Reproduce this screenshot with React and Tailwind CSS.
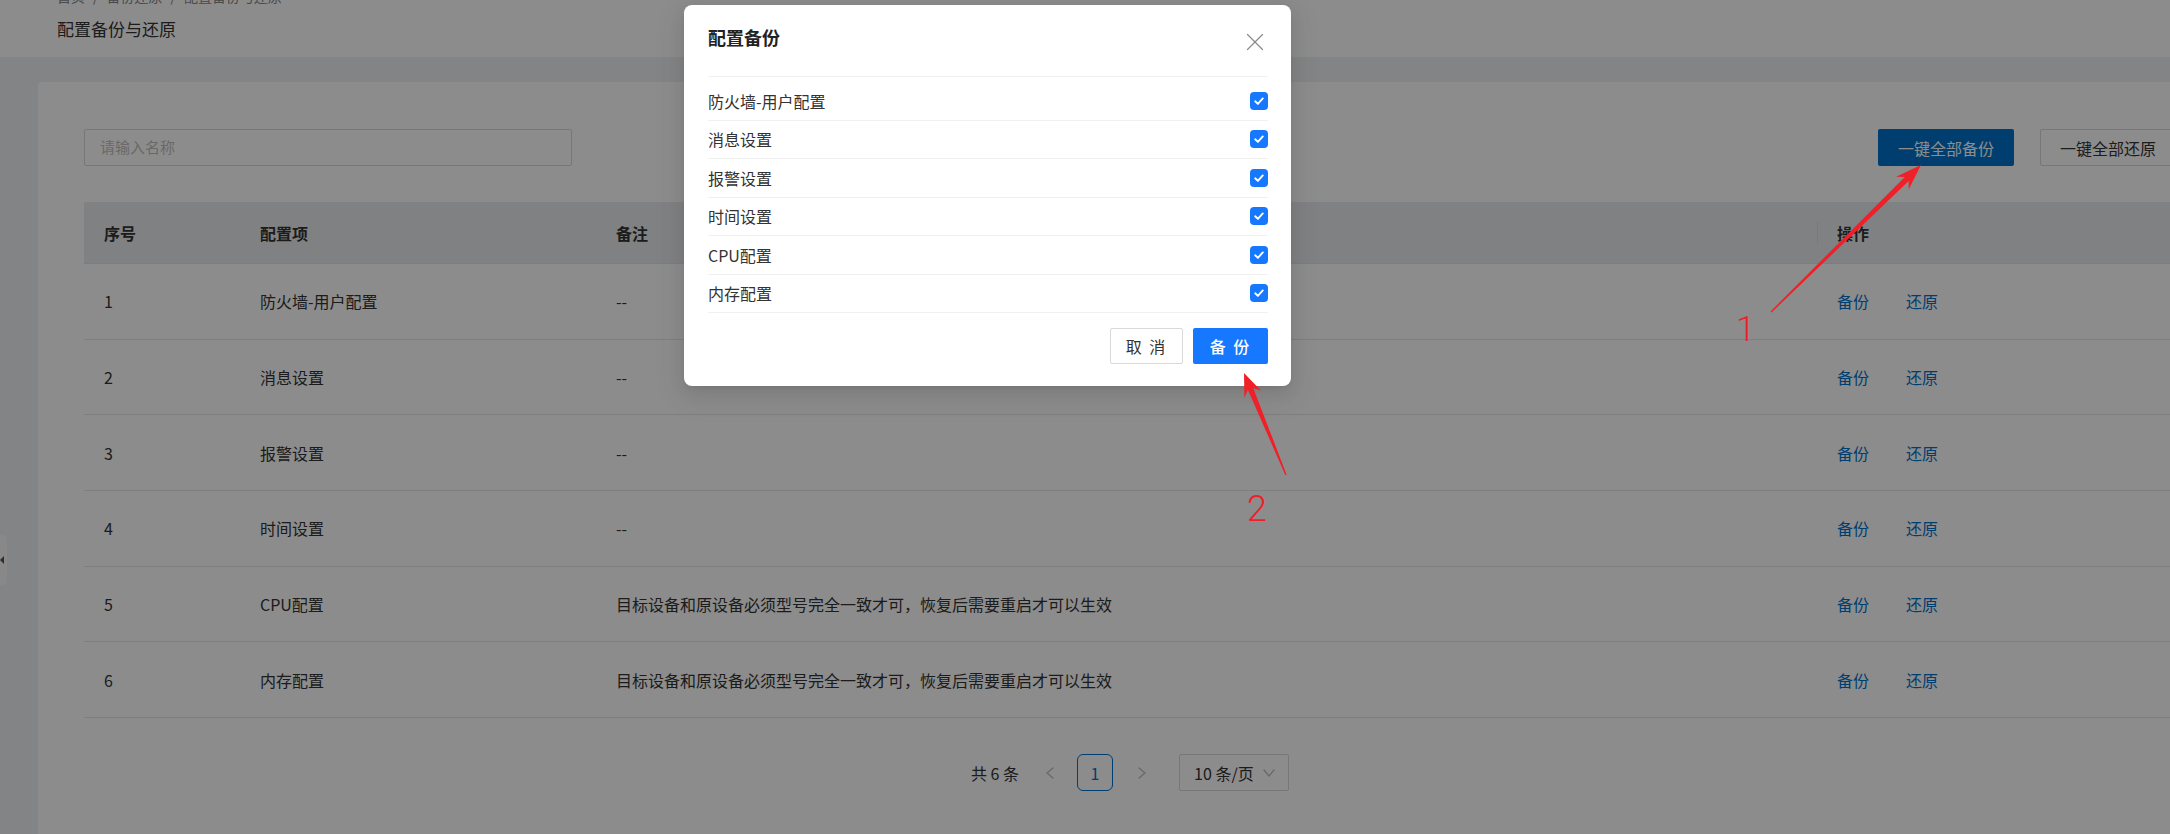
import React from 'react';
import { X } from 'lucide-react';

const rows = [
    { id: 1, name: '防火墙-用户配置', remark: '--' },
    { id: 2, name: '消息设置', remark: '--' },
    { id: 3, name: '报警设置', remark: '--' },
    { id: 4, name: '时间设置', remark: '--' },
    { id: 5, name: 'CPU配置', remark: '目标设备和原设备必须型号完全一致才可，恢复后需要重启才可以生效' },
    { id: 6, name: '内存配置', remark: '目标设备和原设备必须型号完全一致才可，恢复后需要重启才可以生效' },
];

// builds a tapered arrow polygon from tail to tip
const arrowPoints = (tail, tip, head = 24, half = 9) => {
    const dx = tip[0] - tail[0];
    const dy = tip[1] - tail[1];
    const len = Math.hypot(dx, dy);
    const ux = dx / len, uy = dy / len;
    const nx = -uy, ny = ux;
    const local = [
        [0, -0.7], [len - head + 4, -2.8], [len - head - 2, -half], [len, 0],
        [len - head - 2, half], [len - head + 4, 2.8], [0, 0.7],
    ];
    return local
        .map(([a, b]) => `${(tail[0] + ux * a + nx * b).toFixed(1)},${(tail[1] + uy * a + ny * b).toFixed(1)}`)
        .join(' ');
};

const CheckBox = () => (
    <span className="w-[18px] h-[18px] rounded-[4px] bg-[#1677ff] flex items-center justify-center">
        <svg width="12" height="12" viewBox="0 0 12 12" fill="none">
            <polyline points="2.2,6.3 4.9,8.9 9.8,3.4" stroke="white" strokeWidth="1.9" strokeLinecap="round" strokeLinejoin="round" />
        </svg>
    </span>
);

const Chevron = ({ points, w = 10, h = 12 }) => (
    <svg width={w} height={h} viewBox={`0 0 ${w} ${h}`} fill="none">
        <polyline points={points} stroke="currentColor" strokeWidth="1.3" strokeLinecap="round" strokeLinejoin="round" />
    </svg>
);

const App = () => {
    return (
        <div className="relative w-[2170px] h-[834px] overflow-hidden bg-[#eef0f3] font-['Noto_Sans_CJK_SC','Noto_Sans',sans-serif] text-[#333]">
            <header className="h-[57px] bg-white pl-[57px] flex flex-col">
                <div className="-mt-[14px] h-[20px] flex items-center gap-[8px] text-[14px] leading-[20px] text-[#888]">
                    <span>首页</span><span>/</span><span>备份还原</span><span>/</span><span>配置备份与还原</span>
                </div>
                <h1 className="mt-[11px] text-[17px] leading-[24px] text-[#333]">配置备份与还原</h1>
            </header>

            <div className="pl-[38px] pt-[25px]">
                <div className="w-[2184px] h-[800px] bg-white rounded-[4px] px-[46px] pt-[47px]">
                    <div className="flex items-center justify-between">
                        <div className="w-[488px] h-[37px] border border-[#d9d9d9] rounded-[2px] px-[15px] flex items-center text-[15px] text-[#bfbfbf]">
                            请输入名称
                        </div>
                        <div className="flex items-center gap-[26px]">
                            <button className="w-[136px] h-[37px] rounded-[2px] bg-[#0071cc] text-white text-[16px]">一键全部备份</button>
                            <button className="w-[136px] h-[37px] rounded-[2px] border border-[#d9d9d9] bg-white text-[#333] text-[16px]">一键全部还原</button>
                        </div>
                    </div>

                    <div className="mt-[36px]">
                        <div className="grid grid-cols-[156px_356px_1221px_1fr] h-[62px] bg-[#eaecef] border-b border-[#e4e4e4] items-center text-[16px] font-bold text-[#333]">
                            <div className="pl-[20px]">序号</div>
                            <div className="pl-[20px]">配置项</div>
                            <div className="pl-[20px]">备注</div>
                            <div className="pl-[20px] relative">
                                <span className="absolute left-0 top-1/2 -translate-y-1/2 w-px h-[22px] bg-[#dcdcdc]" />
                                操作
                            </div>
                        </div>
                        {rows.map((row) => (
                            <div key={row.id} className="grid grid-cols-[156px_356px_1221px_1fr] h-[75.7px] border-b border-[#e6e6e6] items-center text-[16px] text-[#333]">
                                <div className="pl-[20px]">{row.id}</div>
                                <div className="pl-[20px]">{row.name}</div>
                                <div className="pl-[20px]">{row.remark}</div>
                                <div className="pl-[20px] flex gap-[37px] text-[#0071cc]">
                                    <span>备份</span>
                                    <span>还原</span>
                                </div>
                            </div>
                        ))}
                    </div>

                    <div className="mt-[36px] flex items-center justify-center text-[16px] text-[#333]">
                        <span>共 6 条</span>
                        <span className="ml-[15px] w-[32px] h-[36px] flex items-center justify-center text-[#bfbfbf]">
                            <Chevron points="8,1 2,6 8,11" />
                        </span>
                        <span className="ml-[11px] w-[36px] h-[37px] border border-[#0071cc] rounded-[6px] flex items-center justify-center text-[#0071cc]">1</span>
                        <span className="ml-[13px] w-[32px] h-[36px] flex items-center justify-center text-[#bfbfbf]">
                            <Chevron points="2,1 8,6 2,11" />
                        </span>
                        <div className="ml-[21px] w-[110px] h-[37px] border border-[#d9d9d9] rounded-[2px] pl-[14px] pr-[13px] flex items-center justify-between">
                            <span>10 条/页</span>
                            <span className="text-[#bfbfbf] flex">
                                <Chevron points="1,2 6,8 11,2" w={12} h={10} />
                            </span>
                        </div>
                    </div>
                </div>
            </div>

            <div className="absolute left-0 top-[535px] w-[7px] h-[50px] bg-[#f7f7f7] rounded-r-[4px] flex items-center">
                <span className="w-0 h-0 border-y-[4px] border-y-transparent border-r-[4px] border-r-[#555]" />
            </div>

            <div className="absolute inset-0 bg-black/45" />

            <div className="absolute left-[684px] top-[5px] w-[607px] h-[381px] bg-white rounded-[8px] pl-[24px] pr-[23px] shadow-[0_6px_16px_0_rgba(0,0,0,0.08),0_3px_6px_-4px_rgba(0,0,0,0.12),0_9px_28px_8px_rgba(0,0,0,0.05)]">
                <div className="pt-[20px] pb-[27px] border-b border-[#f0f0f0]">
                    <h2 className="text-[18px] leading-[24px] font-bold text-[#222]">配置备份</h2>
                </div>
                <button className="absolute right-[21px] top-[22px] text-[#8c8c8c]">
                    <X size={30} strokeWidth={1} />
                </button>
                <div className="pt-[5px]">
                    {rows.map((row) => (
                        <div key={row.id} className="h-[38.5px] border-b border-[#f0f0f0] flex items-center justify-between text-[16px] text-[#333]">
                            <span>{row.name}</span>
                            <CheckBox />
                        </div>
                    ))}
                </div>
                <div className="mt-[15px] flex justify-end gap-[10px]">
                    <button className="w-[73px] h-[36px] border border-[#d9d9d9] rounded-[2px] bg-white text-[16px] text-[#333] tracking-[2px]">取 消</button>
                    <button className="w-[75px] h-[36px] rounded-[2px] bg-[#1677ff] text-[16px] font-medium text-white tracking-[2px]">备 份</button>
                </div>
            </div>

            <svg className="absolute inset-0 pointer-events-none" width="2170" height="834">
                <polygon points={arrowPoints([1771, 312], [1921, 165], 24, 9)} fill="#f02028" />
                <polygon points={arrowPoints([1286, 475], [1244, 373], 21, 9)} fill="#f02028" />
            </svg>
            <span className="absolute left-[1736px] top-[310px] text-[35px] leading-[40px] font-light font-['Roboto',sans-serif] text-[#f02028]">1</span>
            <span className="absolute left-[1247px] top-[489px] text-[36px] leading-[40px] font-light font-['Roboto',sans-serif] text-[#f02028]">2</span>
        </div>
    );
};

export default App;
